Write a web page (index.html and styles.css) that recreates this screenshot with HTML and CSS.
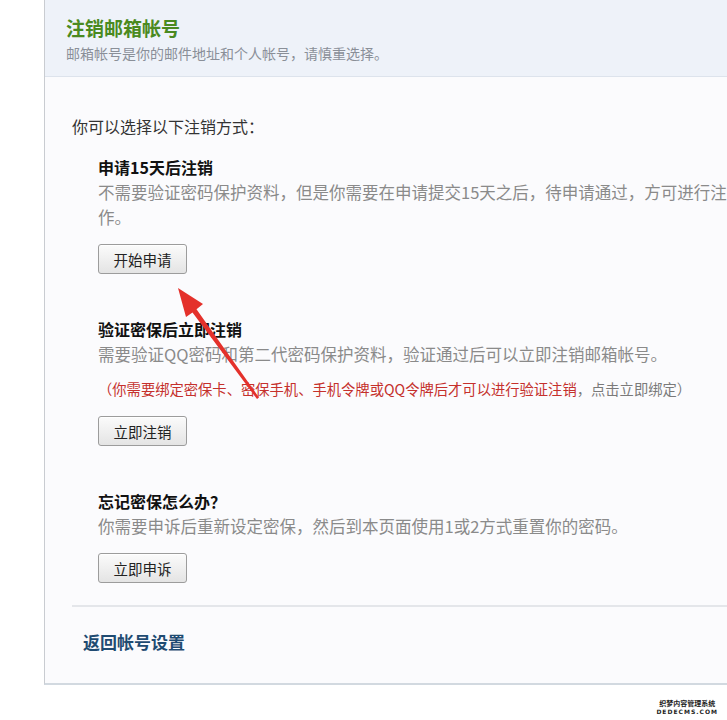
FILE: index.html
```html
<!DOCTYPE html>
<html lang="zh-CN">
<head>
  <meta charset="UTF-8" />
  <title>注销邮箱帐号</title>
  <link rel="stylesheet" href="styles.css">
</head>
<body>
  <div class="panel">
    <div class="panel-head">
      <h1>注销邮箱帐号</h1>
      <p class="sub">邮箱帐号是你的邮件地址和个人帐号，请慎重选择。</p>
    </div>

    <div class="panel-body">
      <p class="intro">你可以选择以下注销方式：</p>

      <div class="option">
        <h2>申请15天后注销</h2>
        <p class="desc">不需要验证密码保护资料，但是你需要在申请提交15天之后，待申请通过，方可进行注销操作。</p>
        <button class="btn">开始申请</button>
      </div>

      <div class="option">
        <h2>验证密保后立即注销</h2>
        <p class="desc">需要验证QQ密码和第二代密码保护资料，验证通过后可以立即注销邮箱帐号。</p>
        <p class="warn"><span class="red">（你需要绑定密保卡、密保手机、手机令牌或QQ令牌后才可以进行验证注销</span>，点击立即绑定）</p>
        <button class="btn">立即注销</button>
      </div>

      <div class="option">
        <h2>忘记密保怎么办？</h2>
        <p class="desc">你需要申诉后重新设定密保，然后到本页面使用1或2方式重置你的密码。</p>
        <button class="btn">立即申诉</button>
      </div>

      <div class="panel-foot">
        <a href="#" class="back">返回帐号设置</a>
      </div>
    </div>
  </div>

  <!-- red arrow drawn over the page -->
  <svg class="arrow" width="727" height="720" viewBox="0 0 727 720">
    <polygon points="178,288 203,304 196.5,309.2 259,397.6 257,399 192.5,312.4 186,317" fill="#e4312b" />
  </svg>

  <div class="mark">
    <div class="mark-cn">织梦内容管理系统</div>
    <div class="mark-en">DEDECMS.COM</div>
  </div>
</body>
</html>
```

FILE: styles.css
```css
body {
  margin: 0;
  width: 727px;
  height: 720px;
  overflow: hidden;
  position: relative;
  background: #ffffff;
  font-family: "Noto Sans CJK SC", "Liberation Sans", sans-serif;
  color: #333333;
}

.panel {
  margin-left: 44px;
  width: 760px;
  border-left: 1px solid #c9ccd1;
  border-bottom: 2px solid #d2d9e0;
  background-color: #fbfbfd;
}

.panel-head {
  height: 76px;
  padding: 0 0 0 21px;
  background-color: #eef2f9;
  border-bottom: 1px solid #dde3ec;
  box-sizing: content-box;
}

.panel-head h1 {
  margin: 0;
  padding-top: 15px;
  font-size: 19px;
  line-height: 26px;
  font-weight: bold;
  color: #4a8a20;
}

.sub {
  margin: 0;
  padding-top: 2px;
  font-size: 14px;
  line-height: 20px;
  color: #8a8f98;
}

.panel-body {
  padding: 37px 0 0 27px;
}

.intro {
  margin: 0;
  font-size: 16px;
  line-height: 24px;
  color: #333333;
}

.option {
  margin-left: 26px;
  margin-top: 17px;
}

.option + .option {
  margin-top: 43px;
}

.option h2 {
  margin: 0;
  font-size: 16px;
  line-height: 24px;
  font-weight: bold;
  color: #111111;
}

.desc {
  margin: 1px 0 0;
  width: 670px;
  font-size: 16.5px;
  line-height: 25px;
  color: #8a8a8a;
}

.warn {
  margin: 10px 0 0;
  font-size: 14.3px;
  line-height: 24px;
  color: #7a7a7a;
}

.warn .red {
  color: #c5302c;
}

.btn {
  display: block;
  margin-top: 14px;
  width: 89px;
  height: 30px;
  padding: 0;
  font-family: inherit;
  font-size: 14.5px;
  color: #222222;
  border: 1px solid #9c9c9c;
  border-radius: 3px;
  background: linear-gradient(#fbfbfb, #e4e4e4);
  box-shadow: inset 0 1px 0 #ffffff;
}

.warn + .btn {
  margin-top: 15px;
}

.panel-foot {
  margin-top: 22px;
  border-top: 2px solid #e4e6ea;
  padding: 23px 0 29px 11px;
}

.back {
  font-size: 17px;
  line-height: 24px;
  font-weight: bold;
  color: #1f4b72;
  text-decoration: none;
}

.arrow {
  position: absolute;
  top: 0;
  left: 0;
  pointer-events: none;
}

.mark {
  position: absolute;
  right: 9px;
  bottom: 4px;
  text-align: center;
  color: #222222;
  font-weight: bold;
}

.mark-cn {
  font-size: 7px;
  line-height: 9px;
}

.mark-en {
  font-family: "DejaVu Sans", sans-serif;
  font-size: 6px;
  line-height: 8px;
  letter-spacing: 1px;
}
```
